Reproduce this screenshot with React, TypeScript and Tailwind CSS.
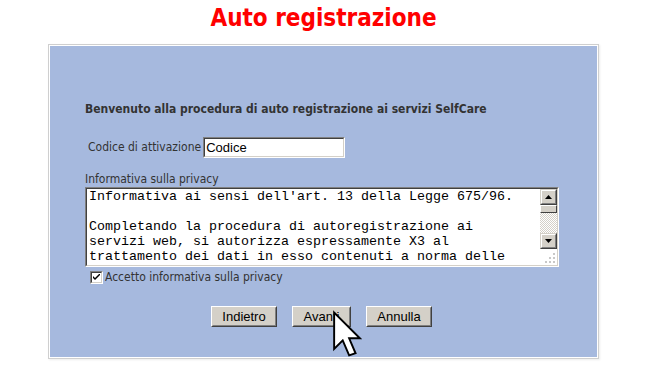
import React from "react";

const tahoma = { fontFamily: '"DejaVu Sans Condensed", "DejaVu Sans", sans-serif' };

function ScrollBtn({ dir }: { dir: "up" | "down" }) {
  return (
    <div className="w-[17px] h-[16px] bg-[#d4d0c8] border border-t-[#d4d0c8] border-l-[#d4d0c8] border-r-[#404040] border-b-[#404040]">
      <div className="w-full h-full border border-t-white border-l-white border-r-[#808080] border-b-[#808080] flex items-center justify-center">
        <svg width="7" height="4" viewBox="0 0 7 4">
          {dir === "up" ? (
            <polygon points="3.5,0 7,4 0,4" fill="#000" />
          ) : (
            <polygon points="0,0 7,0 3.5,4" fill="#000" />
          )}
        </svg>
      </div>
    </div>
  );
}

function Btn({ label, w }: { label: string; w: string }) {
  return (
    <div
      className={`${w} h-[21px] bg-[#d4d0c8] border border-t-white border-l-white border-r-[#404040] border-b-[#404040]`}
    >
      <div className="w-full h-full border border-t-[#d4d0c8] border-l-[#d4d0c8] border-r-[#808080] border-b-[#808080] flex items-center justify-center text-[13px] text-black font-['Liberation_Sans',Arial,sans-serif] leading-none">
        {label}
      </div>
    </div>
  );
}

export default function App() {
  const lines = [
    "Informativa ai sensi dell'art. 13 della Legge 675/96.",
    "\u00a0",
    "Completando la procedura di autoregistrazione ai",
    "servizi web, si autorizza espressamente X3 al",
    "trattamento dei dati in esso contenuti a norma delle",
  ];
  return (
    <div className="relative w-[647px] h-[365px] bg-white overflow-hidden">
      <div
        className="text-center text-[#ff0000] font-bold text-[24px] leading-[29px] pt-[4px] mb-[11px]"
        style={tahoma}
      >
        Auto registrazione
      </div>
      <div className="ml-[48px] w-[551px] h-[315px] border border-[#cfcfcf] bg-white p-px shadow-[1px_1px_2px_rgba(0,0,0,0.08)]">
        <div className="w-full h-full bg-[#a6b9de] pl-[35px] pt-[56px]" style={tahoma}>
          <div className="text-[12px] font-bold text-[#333] leading-[15px]">
            Benvenuto alla procedura di auto registrazione ai servizi SelfCare
          </div>
          <div className="flex items-center mt-[20px] ml-[3px]">
            <span className="text-[12px] text-[#333] leading-[15px] mr-[2px]">Codice di attivazione</span>
            <div className="w-[142px] h-[21px] bg-white border border-t-[#808080] border-l-[#808080] border-r-white border-b-white">
              <div className="w-full h-full border border-t-[#404040] border-l-[#404040] border-r-[#d4d0c8] border-b-[#d4d0c8] flex items-center pl-[1px] text-[13px] text-black font-['Liberation_Sans',Arial,sans-serif] leading-none">
                Codice
              </div>
            </div>
          </div>
          <div className="text-[12px] text-[#333] leading-[15px] mt-[14px]">Informativa sulla privacy</div>
          <div className="w-[474px] h-[80px] bg-white border border-t-[#808080] border-l-[#808080] border-r-white border-b-white">
            <div className="w-full h-full flex border border-t-[#404040] border-l-[#404040] border-r-[#d4d0c8] border-b-[#d4d0c8]">
              <div className="flex-1 overflow-hidden pl-[2px] text-[13.33px] leading-[15px] text-black font-['Liberation_Mono','Courier_New',monospace] whitespace-pre">
                {lines.map((l, i) => (
                  <div key={i}>{l}</div>
                ))}
              </div>
              <div className="w-[17px] flex flex-col">
                <ScrollBtn dir="up" />
                <div className="w-[17px] h-[8px] bg-[#d4d0c8] border border-t-white border-l-white border-r-[#404040] border-b-[#404040]" />
                <div className="flex-1 bg-[repeating-conic-gradient(#d4d0c8_0%_25%,#ffffff_0%_50%)] bg-[length:2px_2px]" />
                <ScrollBtn dir="down" />
                <div className="h-[16px] bg-white relative">
                  <svg className="absolute right-[1px] bottom-[1px]" width="11" height="11" viewBox="0 0 11 11">
                    {[
                      [8, 0],
                      [4, 4],
                      [8, 4],
                      [0, 8],
                      [4, 8],
                      [8, 8],
                    ].map(([x, y], i) => (
                      <rect key={i} x={x} y={y} width="2" height="2" fill="#c8c8c8" />
                    ))}
                  </svg>
                </div>
              </div>
            </div>
          </div>
          <div className="flex items-center mt-[3px] ml-[5px]">
            <div className="w-[13px] h-[13px] bg-white border border-t-[#808080] border-l-[#808080] border-r-white border-b-white">
              <div className="w-full h-full border border-t-[#404040] border-l-[#404040] border-r-[#d4d0c8] border-b-[#d4d0c8] flex items-center justify-center">
                <svg width="7" height="7" viewBox="0 0 7 7">
                  <path d="M0 2 L0 4 L2 6 L7 1 L7 -1 L2 4 Z" fill="#000" />
                </svg>
              </div>
            </div>
            <span className="text-[12px] text-[#333] leading-[15px] ml-[2px]">Accetto informativa sulla privacy</span>
          </div>
          <div className="flex justify-center gap-[15px] mt-[21px] pr-[39px]">
            <Btn label="Indietro" w="w-[66px]" />
            <Btn label="Avanti" w="w-[59px]" />
            <Btn label="Annulla" w="w-[66px]" />
          </div>
        </div>
      </div>
      <svg className="absolute left-[332px] top-[310px]" width="30" height="48" viewBox="-1 -1 14 22">
        <path
          d="M0 0 L0 17 L4 13 L7 20 L10 19 L7 12 L12 12 Z"
          fill="#fff"
          stroke="#000"
          strokeWidth="0.9"
          strokeLinejoin="miter"
        />
      </svg>
    </div>
  );
}
